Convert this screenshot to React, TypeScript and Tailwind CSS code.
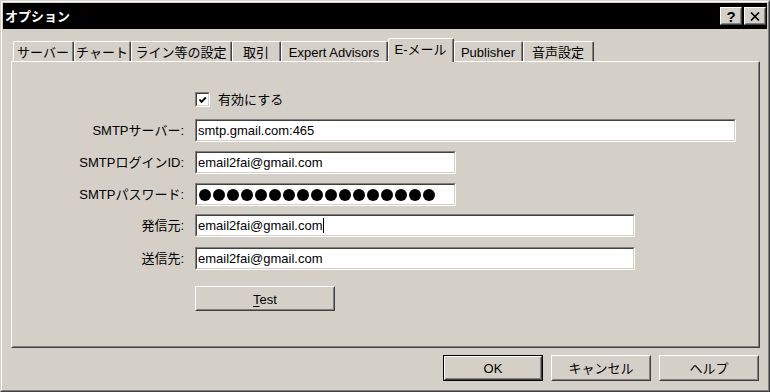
import React from 'react';

const FONT = "font-['Liberation_Sans','Noto_Sans_CJK_JP',sans-serif]";

const tabs = [
  { label: 'サーバー', w: 'w-[61px]' },
  { label: 'チャート', w: 'w-[57px]' },
  { label: 'ライン等の設定', w: 'w-[101px]' },
  { label: '取引', w: 'w-[49px]' },
  { label: 'Expert Advisors', w: 'w-[107px]' },
  { label: 'E-メール', w: 'w-[66px]', active: true },
  { label: 'Publisher', w: 'w-[69px]' },
  { label: '音声設定', w: 'w-[71px]' },
];

// classic 3D raised frame (outer white / #404040, inner #d4d0c8 / #808080)
const Raised: React.FC<{ className?: string; children?: React.ReactNode }> = ({ className = '', children }) => (
  <div className={`border border-t-white border-l-white border-r-[#404040] border-b-[#404040] bg-[#d4d0c8] ${className}`}>
    <div className="w-full h-full border border-t-[#d4d0c8] border-l-[#d4d0c8] border-r-[#808080] border-b-[#808080] flex items-center justify-center">
      {children}
    </div>
  </div>
);

// sunken edit box
const Sunken: React.FC<{ className?: string; children?: React.ReactNode }> = ({ className = '', children }) => (
  <div className={`border border-t-[#808080] border-l-[#808080] border-r-white border-b-white ${className}`}>
    <div className="w-full h-full border border-t-[#404040] border-l-[#404040] border-r-[#d4d0c8] border-b-[#d4d0c8] bg-white flex items-center pl-px overflow-hidden whitespace-nowrap">
      {children}
    </div>
  </div>
);

const Row: React.FC<{ label: string; className?: string; children: React.ReactNode }> = ({ label, className = '', children }) => (
  <div className={`flex items-center ${className}`}>
    <div className="w-[171px] text-right leading-none">{label}</div>
    <div className="ml-[11px]">{children}</div>
  </div>
);

export default function App() {
  return (
    <div className={`w-[770px] h-[392px] bg-[#d4d0c8] border border-t-[#d4d0c8] border-l-[#d4d0c8] border-r-[#404040] border-b-[#404040] text-[13px] text-black ${FONT}`}>
      <div className="h-full border border-t-white border-l-white border-r-[#808080] border-b-[#808080] p-px flex flex-col">
        {/* title bar */}
        <div className="h-[26px] bg-black flex items-center justify-between pl-[2px] pr-[1px]">
          <span className="text-white font-bold text-[13px] leading-none">オプション</span>
          <div className="flex gap-[2px]">
            <Raised className="w-[22px] h-[18px]">
              <span className="font-bold text-[15px] leading-none font-['Liberation_Sans',sans-serif]">?</span>
            </Raised>
            <Raised className="w-[22px] h-[18px]">
              <svg width="10" height="9" viewBox="0 0 10 9">
                <path d="M1 0.5 L9 8.5 M9 0.5 L1 8.5" stroke="black" strokeWidth="1.6" />
              </svg>
            </Raised>
          </div>
        </div>

        <div className="pl-[8px]">
          {/* tabs */}
          <div className="relative z-10 h-[32px] flex items-end pl-[2px]">
            {tabs.map((t) =>
              t.active ? (
                <div
                  key={t.label}
                  className={`${t.w} h-[24px] mb-[-1px] bg-[#d4d0c8] border-l border-t border-r border-l-white border-t-white border-r-[#404040] rounded-tr-[2px] rounded-tl-[2px]`}
                >
                  <div className="h-full border-r border-r-[#808080] flex items-start justify-center pt-[4px] leading-none">
                    {t.label}
                  </div>
                </div>
              ) : (
                <div
                  key={t.label}
                  className={`${t.w} h-[20px] bg-[#d4d0c8] border-l border-t border-r border-l-white border-t-white border-r-[#404040] rounded-tr-[2px] rounded-tl-[2px]`}
                >
                  <div className="h-full border-r border-r-[#808080] flex items-center justify-center leading-none pt-px">
                    {t.label}
                  </div>
                </div>
              )
            )}
          </div>

          {/* tab panel */}
          <div className="w-[749px] h-[287px] border border-t-white border-l-white border-r-[#404040] border-b-[#404040]">
            <div className="h-full border border-t-[#d4d0c8] border-l-[#d4d0c8] border-r-[#808080] border-b-[#808080] flex flex-col">
              <div className="mt-[29px] flex items-center">
                <div className="w-[171px]" />
                <div className="ml-[11px] w-[15px] h-[15px] border border-t-[#808080] border-l-[#808080] border-r-white border-b-white">
                  <div className="w-full h-full border border-t-[#404040] border-l-[#404040] border-r-[#d4d0c8] border-b-[#d4d0c8] bg-white flex items-center justify-center">
                    <svg width="9" height="8" viewBox="0 0 9 8">
                      <path d="M1.5 3.5 L3.5 5.8 L7.8 1.5" stroke="black" strokeWidth="1.9" fill="none" />
                    </svg>
                  </div>
                </div>
                <span className="ml-[8px] leading-none">有効にする</span>
              </div>

              <Row label="SMTPサーバー:" className="mt-[12px]">
                <Sunken className="w-[541px] h-[23px]">smtp.gmail.com:465</Sunken>
              </Row>
              <Row label="SMTPログインID:" className="mt-[9px]">
                <Sunken className="w-[261px] h-[23px]">email2fai@gmail.com</Sunken>
              </Row>
              <Row label="SMTPパスワード:" className="mt-[9px]">
                <Sunken className="w-[261px] h-[23px]">
                  <div className="flex gap-[2px] pl-px">
                    {Array.from({ length: 17 }).map((_, i) => (
                      <span key={i} className="w-[12px] h-[12px] rounded-full bg-black" />
                    ))}
                  </div>
                </Sunken>
              </Row>
              <Row label="発信元:" className="mt-[8px]">
                <Sunken className="w-[440px] h-[23px]">
                  email2fai@gmail.com
                  <span className="inline-block w-px h-[15px] bg-black ml-px" />
                </Sunken>
              </Row>
              <Row label="送信先:" className="mt-[10px]">
                <Sunken className="w-[440px] h-[23px]">email2fai@gmail.com</Sunken>
              </Row>

              <div className="mt-[16px] flex">
                <div className="w-[171px]" />
                <Raised className="ml-[11px] w-[140px] h-[25px]">
                  <span className="leading-none pt-px">
                    <span className="underline underline-offset-2">T</span>est
                  </span>
                </Raised>
              </div>
            </div>
          </div>

          {/* dialog buttons */}
          <div className="mt-[7px] w-[749px] flex justify-end gap-[8px] pr-px">
            <div className="w-[100px] h-[26px] border border-black">
              <Raised className="w-full h-full">
                <span className="leading-none">OK</span>
              </Raised>
            </div>
            <Raised className="w-[100px] h-[26px]">
              <span className="leading-none">キャンセル</span>
            </Raised>
            <Raised className="w-[100px] h-[26px]">
              <span className="leading-none">ヘルプ</span>
            </Raised>
          </div>
        </div>
      </div>
    </div>
  );
}
